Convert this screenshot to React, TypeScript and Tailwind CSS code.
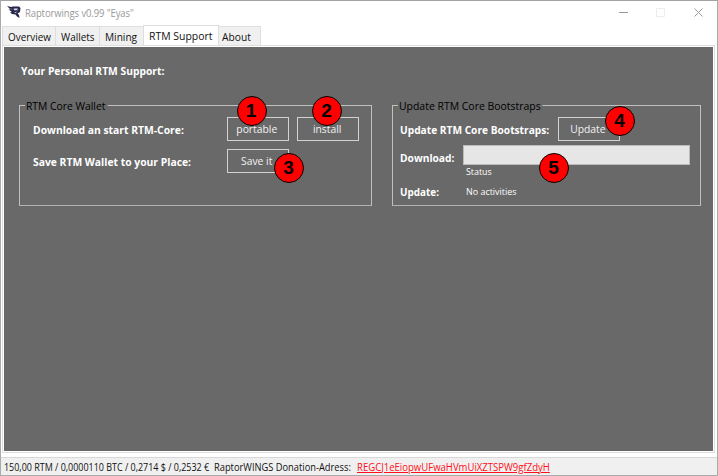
import React from "react";

function Badge({ n, className }: { n: number; className: string }) {
  return (
    <span
      className={`absolute z-10 flex h-[30px] w-[30px] items-center justify-center rounded-full border border-black bg-[#ff0000] pr-px pb-px font-['Liberation_Sans',sans-serif] text-[19px] leading-none font-bold text-black ${className}`}
    >
      {n}
    </span>
  );
}

function Button({ children, className = "" }: { children: React.ReactNode; className?: string }) {
  return (
    <button
      className={`flex h-[24px] w-[62px] items-center justify-center border border-[#d2d2d2] pr-[2px] pb-px text-[11px] text-[#f2f2f2] ${className}`}
    >
      <span className="scale-x-[.94]">{children}</span>
    </button>
  );
}

function Group({ title, className, titleClass, children }: { title: string; className: string; titleClass: string; children: React.ReactNode }) {
  return (
    <section className={`relative h-[101px] border border-[#c0c0c0] border-b-[#b2b2b2] text-white ${className}`}>
      <h2 className={`absolute -top-[8px] left-[5px] origin-left bg-[#696969] pr-[2px] pl-[1px] text-[11px] leading-[15px] text-black ${titleClass}`}>
        {title}
      </h2>
      {children}
    </section>
  );
}

function RaptorLogo() {
  return (
    <svg className="h-[13px] w-[15px]" viewBox="0 0 15 13" fill="none">
      <path d="M0 0 4 1 6 .5 12 .5 13.500 2 13 6 10.500 7.500 12 9 12.500 12 10 10.500 8.500 8.500 5 8 3 6.500 5 6 1.500 3.500 3.500 3.500Z" fill="#25264a" />
      <path d="M6.500 2.500 11 2.500 10 4 7.500 4.500ZM7 6l3 .5-1.500.7Z" fill="#e2e2ec" />
      <path d="m3.500 2 2 2m4 1.500 2-1.500" stroke="#8a8ba8" strokeWidth=".7" />
    </svg>
  );
}

const tab = "flex h-[19px] items-center border border-b-0 border-[#dedede] bg-[#f0f0f0]";
const boldLabel = "origin-left scale-x-[.94] font-bold";

export default function App() {
  return (
    <div className="flex h-[476px] w-[718px] flex-col overflow-hidden border border-t-[#a2a2a2] border-r-[#aaa] border-b-[#aaa] border-l-[#aaa] bg-white font-['Open_Sans','Noto_Sans',sans-serif] text-[11px] leading-[15px] whitespace-nowrap text-[#111]">
      <header className="flex h-[24px] shrink-0 items-center pb-px pl-[6px]">
        <RaptorLogo />
        <span className="ml-[3px] origin-left scale-x-[.86] text-[11px] tracking-[-0.1px] text-[#999]">Raptorwings v0.99 "Eyas"</span>
        <svg className="mt-px mr-[13px] ml-auto h-[10px] w-[85px]" viewBox="0 0 85 10" fill="none">
          <path d="M0 4.500h9" stroke="#999" />
          <path d="M37.500.5h8v8h-8z" stroke="#ececec" />
          <path d="m75.500.5 8 8m0-8-8 8" stroke="#999" />
        </svg>
      </header>
      <nav className="flex h-[20px] shrink-0 items-end pl-px">
        <span className={`${tab} w-[54px] pl-[5px]`}><span className="origin-left scale-x-[.9]">Overview</span></span>
        <span className={`${tab} w-[44px] border-l-0 pl-[5px]`}><span className="origin-left scale-x-[.9]">Wallets</span></span>
        <span className={`${tab} w-[43px] border-r-0 border-l-0 pl-[5px]`}><span className="origin-left scale-x-[.92]">Mining</span></span>
        <span className={`${tab} h-[20px] w-[76px] bg-white pl-[5px] pb-px`}><span className="origin-left scale-x-[.95]">RTM Support</span></span>
        <span className={`${tab} w-[42px] border-l-0 pl-[3px]`}><span className="origin-left scale-x-[.93]">About</span></span>
      </nav>
      <main className="mr-[2px] ml-px h-[408px] shrink-0 border border-[#dedede] p-px">
        <div className="h-[404px] bg-[#696969] pt-[16px]">
          <h1 className="ml-[17px] h-[15px] origin-left scale-x-[.935] text-[11px] font-bold text-white">Your Personal RTM Support:</h1>
          <div className="mt-[27px] ml-[15px] flex gap-[20px]">
            <Group title="RTM Core Wallet" titleClass="scale-x-[.94]" className="w-[353px] pt-[11px] pl-[13px]">
              <div className="flex items-center">
                <span className={`w-[194px] ${boldLabel}`}>Download an start RTM-Core:</span>
                <Button>portable</Button>
                <Button className="ml-[8px]">install</Button>
              </div>
              <div className="mt-[8px] flex items-center">
                <span className={`w-[194px] ${boldLabel}`}>Save RTM Wallet to your Place:</span>
                <Button>Save it</Button>
              </div>
              <Badge n={1} className="top-[-10px] left-[216.5px]" />
              <Badge n={2} className="top-[-10px] left-[292px]" />
              <Badge n={3} className="top-[47px] left-[254px]" />
            </Group>
            <Group title="Update RTM Core Bootstraps" titleClass="scale-x-[.95]" className="w-[309px] pt-[11px] pl-[7px]">
              <div className="flex items-center">
                <span className="w-[158px] origin-left scale-x-[.925] font-bold">Update RTM Core Bootstraps:</span>
                <Button>Update</Button>
              </div>
              <div className="mt-[4px] flex items-center">
                <span className="w-[63px] origin-left scale-x-[.93] pt-[5px] font-bold">Download:</span>
                <div className="h-[20px] w-[227px] border border-[#bcbcbc] bg-[#e6e6e6]" />
              </div>
              <p className="ml-[66px] h-[12px] origin-left scale-x-[.93] text-[9.5px] leading-[13px]">Status</p>
              <div className="mt-[7px] flex items-center">
                <span className="w-[66px] origin-left scale-x-[.9] font-bold">Update:</span>
                <span className="origin-left scale-x-[.94] text-[9.5px]">No activities</span>
              </div>
              <Badge n={4} className="top-[0px] left-[212px]" />
              <Badge n={5} className="top-[47px] left-[146px]" />
            </Group>
          </div>
        </div>
      </main>
      <footer className="mt-[4px] flex h-[18px] shrink-0 items-center border-t border-[#d8d8d8] bg-[#f0f0f0] pt-px pl-[3px] text-[10px]">
        <span className="w-[210px]"><span className="inline-block origin-left scale-x-[.895]">150,00 RTM / 0,0000110 BTC / 0,2714 $ / 0,2532 €</span></span>
        <span className="w-[143px]"><span className="inline-block origin-left scale-x-[.93]">RaptorWINGS Donation-Adress:</span></span>
        <span className="origin-left scale-x-[.955] text-[#ff1020] underline underline-offset-[1px]">REGCJ1eEiopwUFwaHVmUiXZTSPW9gfZdyH</span>
      </footer>
    </div>
  );
}
